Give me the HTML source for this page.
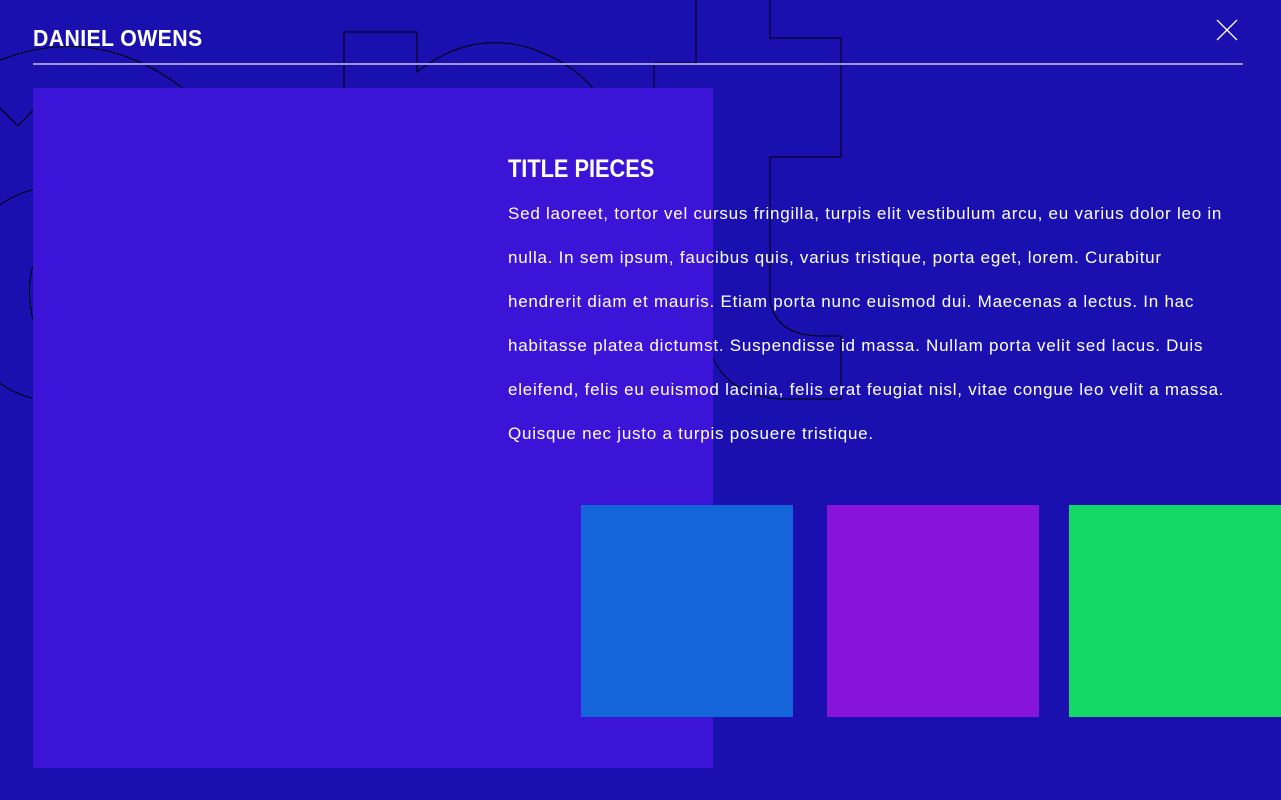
<!DOCTYPE html>
<html><head><meta charset="utf-8"><style>
html,body{margin:0;padding:0}
body{width:1281px;height:800px;background:#1a10b0;position:relative;overflow:hidden;font-family:"Liberation Sans",sans-serif;color:#fff}
.abs{position:absolute}
#name{left:33px;top:25px;font-size:23px;font-weight:bold;letter-spacing:0.4px;transform:scaleX(0.925);transform-origin:left;z-index:3;white-space:nowrap}
#line{left:33px;top:63px;width:1210px;height:2px;background:#9d95e0;z-index:3}
#box{left:33px;top:88px;width:680px;height:680px;background:#3b14d8;z-index:1}
#title{left:508px;top:155px;font-size:25px;font-weight:bold;transform:scaleX(0.87);transform-origin:left;z-index:3;white-space:nowrap}
#txt{left:508px;top:192px;width:760px;font-size:17px;line-height:44px;z-index:3;letter-spacing:0.76px;white-space:nowrap}
.sq{top:505px;width:212px;height:212px;z-index:3}
</style></head><body>
<svg class="abs" style="left:0;top:0;z-index:0" width="1281" height="800" fill="none" stroke="#000" stroke-width="1">
<path d="M0 60 Q130 10 240 145"/>
<path d="M0 108 L18 126 L35 108"/>
<path d="M344 90 L344 32 L417 32 L417 72 Q470 30 530 48 Q580 65 603 102 L578 145"/>
<path d="M696 0 L696 63 L654 63 L654 100"/>
<path d="M770 0 L770 38 L841 38 L841 157 L770 157 L770 300 Q775 335 820 336 L841 336 L841 399 L780 399 Q730 395 713 358"/>
<path d="M0 205 Q20 190 55 185"/>
<path d="M33 265 Q26 290 33 320"/>
<path d="M0 383 Q15 395 40 400"/>
</svg>
<div id="name" class="abs">DANIEL OWENS</div>
<div id="line" class="abs"></div>
<svg class="abs" style="left:1216px;top:19px;z-index:3" width="22" height="22" stroke="#fff" stroke-width="1.3"><path d="M1 1L21 21M21 1L1 21"/></svg>
<div id="box" class="abs"></div>
<div id="title" class="abs">TITLE PIECES</div>
<div id="txt" class="abs">Sed laoreet, tortor vel cursus fringilla, turpis elit vestibulum arcu, eu varius dolor leo in<br>nulla. In sem ipsum, faucibus quis, varius tristique, porta eget, lorem. Curabitur<br>hendrerit diam et mauris. Etiam porta nunc euismod dui. Maecenas a lectus. In hac<br>habitasse platea dictumst. Suspendisse id massa. Nullam porta velit sed lacus. Duis<br>eleifend, felis eu euismod lacinia, felis erat feugiat nisl, vitae congue leo velit a massa.<br>Quisque nec justo a turpis posuere tristique.</div>
<div class="abs sq" style="left:581px;background:#1465d9"></div>
<div class="abs sq" style="left:827px;background:#8914d9"></div>
<div class="abs sq" style="left:1069px;background:#12d966"></div>
</body></html>
